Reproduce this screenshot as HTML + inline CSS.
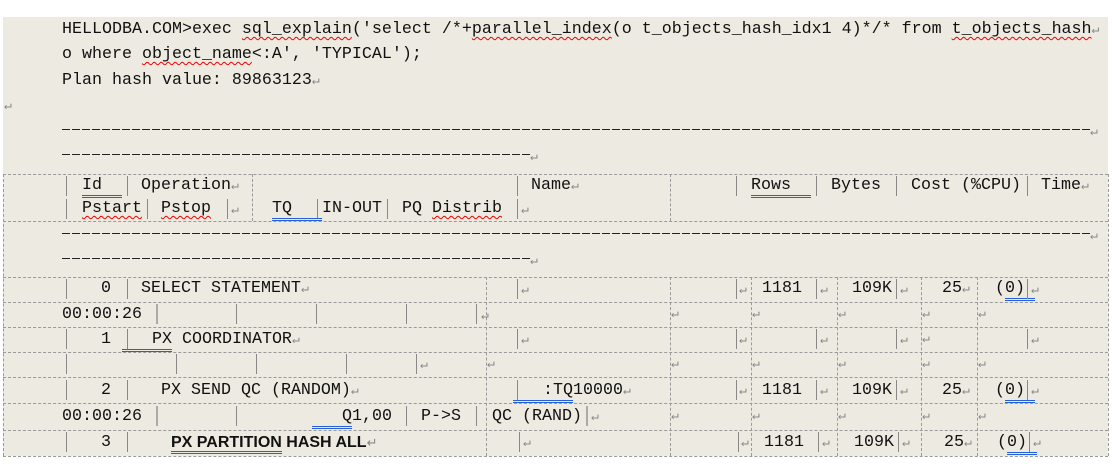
<!DOCTYPE html>
<html><head><meta charset="utf-8"><style>
*{margin:0;padding:0}
body{width:1112px;height:469px;background:#fff;position:relative;overflow:hidden;font-family:"Liberation Mono","Noto Sans CJK SC",monospace;font-size:16.67px;color:#111}
.bg{position:absolute;left:3px;top:17px;width:1105px;height:439px;background:#edebe1}
.t{position:absolute;white-space:pre;line-height:20px;margin-top:2px}
.r{color:#888;font-size:13px}
.w{text-decoration:underline wavy #e00;text-decoration-thickness:1px;text-underline-offset:3px}
.u{border-bottom:3px double #2660d8}
.h{position:absolute;height:0;border-top:1px dashed #9a9a9a}
.v{position:absolute;width:0;border-left:1px dashed #9a9a9a}
.b{position:absolute;width:1px;background:#888}
.dl{position:absolute;height:1px;background:repeating-linear-gradient(90deg,#222 0 8px,transparent 8px 10px)}
.bold{font-family:"Liberation Sans",sans-serif;font-weight:bold;font-size:16px}
</style></head><body>
<div class="bg"></div>
<div class="t" style="left:62px;top:18px">HELLODBA.COM&gt;exec <span class="w">sql_explain</span>('select /*+<span class="w">parallel_index</span>(o t_objects_hash_idx1 4)*/* from <span class="w">t_objects_hash</span><span class="r">↵</span></div>
<div class="t" style="left:62px;top:43px">o where <span class="w">object_name</span>&lt;:A', 'TYPICAL');</div>
<div class="t" style="left:62px;top:69px">Plan hash value: 89863123<span class="r">↵</span></div>
<div class="t r" style="left:4px;top:94px">↵</div>
<div class="dl" style="left:62px;top:129px;width:1030px"></div>
<div class="t r" style="left:1090px;top:120px">↵</div>
<div class="dl" style="left:62px;top:154px;width:470px"></div>
<div class="t r" style="left:530px;top:145px">↵</div>

<div class="h" style="left:3px;top:174px;width:1105px"></div>
<div class="h" style="left:3px;top:221px;width:1105px"></div>
<div class="h" style="left:3px;top:277px;width:1105px"></div>
<div class="h" style="left:3px;top:302px;width:1105px"></div>
<div class="h" style="left:3px;top:327px;width:1105px"></div>
<div class="h" style="left:3px;top:352px;width:1105px"></div>
<div class="h" style="left:3px;top:377px;width:1105px"></div>
<div class="h" style="left:3px;top:403px;width:1105px"></div>
<div class="h" style="left:3px;top:430px;width:1105px"></div>
<div class="h" style="left:3px;top:456px;width:1105px"></div>
<div class="v" style="left:3px;top:174px;height:282px"></div>
<div class="v" style="left:1108px;top:174px;height:282px"></div>
<div class="v" style="left:252px;top:174px;height:47px"></div>
<div class="v" style="left:670px;top:174px;height:47px"></div>
<div class="v" style="left:486px;top:277px;height:179px"></div>
<div class="v" style="left:670px;top:277px;height:179px"></div>
<div class="v" style="left:751px;top:277px;height:179px"></div>
<div class="v" style="left:837px;top:277px;height:179px"></div>
<div class="v" style="left:921px;top:277px;height:179px"></div>
<div class="v" style="left:977px;top:277px;height:179px"></div>

<div class="b" style="left:66px;top:176px;height:20px"></div>
<div class="b" style="left:127px;top:176px;height:20px"></div>
<div class="t" style="left:82px;top:174px"><span class="u">Id&nbsp;&nbsp;</span></div>
<div class="t" style="left:141px;top:174px">Operation<span class="r">↵</span></div>
<div class="b" style="left:517px;top:176px;height:20px"></div>
<div class="t" style="left:531px;top:174px">Name<span class="r">↵</span></div>
<div class="b" style="left:736px;top:176px;height:20px"></div>
<div class="b" style="left:816px;top:176px;height:20px"></div>
<div class="b" style="left:896px;top:176px;height:20px"></div>
<div class="b" style="left:1027px;top:176px;height:20px"></div>
<div class="t" style="left:751px;top:174px"><span class="u">Rows&nbsp;&nbsp;</span></div>
<div class="t" style="left:831px;top:174px">Bytes</div>
<div class="t" style="left:911px;top:174px">Cost (%CPU)</div>
<div class="t" style="left:1041px;top:174px">Time<span class="r">↵</span></div>
<div class="b" style="left:66px;top:199px;height:20px"></div>
<div class="b" style="left:147px;top:199px;height:20px"></div>
<div class="b" style="left:227px;top:199px;height:20px"></div>
<div class="b" style="left:317px;top:199px;height:20px"></div>
<div class="b" style="left:387px;top:199px;height:20px"></div>
<div class="b" style="left:517px;top:199px;height:20px"></div>
<div class="t" style="left:82px;top:197px"><span class="w">Pstart</span></div>
<div class="t" style="left:161px;top:197px"><span class="w">Pstop</span></div>
<div class="t r" style="left:231px;top:198px">↵</div>
<div class="t" style="left:272px;top:197px"><span class="u">TQ&nbsp;&nbsp;&nbsp;</span></div>
<div class="t" style="left:322px;top:197px">IN-OUT</div>
<div class="t" style="left:402px;top:197px">PQ <span class="w">Distrib</span></div>
<div class="t r" style="left:521px;top:198px">↵</div>
<div class="dl" style="left:62px;top:233px;width:1030px"></div>
<div class="t r" style="left:1090px;top:224px">↵</div>
<div class="dl" style="left:62px;top:258px;width:470px"></div>
<div class="t r" style="left:530px;top:249px">↵</div>

<div class="b" style="left:66px;top:279px;height:20px"></div>
<div class="b" style="left:127px;top:279px;height:20px"></div>
<div class="t" style="left:101px;top:277px">0</div>
<div class="t" style="left:141px;top:277px">SELECT STATEMENT<span class="r">↵</span></div>
<div class="b" style="left:517px;top:279px;height:20px"></div><div class="t r" style="left:521px;top:278px">↵</div>
<div class="b" style="left:736px;top:279px;height:20px"></div><div class="t r" style="left:739px;top:278px">↵</div>
<div class="t" style="left:762px;top:277px">1181</div>
<div class="b" style="left:816px;top:279px;height:20px"></div><div class="t r" style="left:820px;top:278px">↵</div>
<div class="t" style="left:852px;top:277px">109K</div>
<div class="b" style="left:896px;top:279px;height:20px"></div><div class="t r" style="left:900px;top:278px">↵</div>
<div class="t" style="left:942px;top:277px">25<span class="r">↵</span></div>
<div class="t" style="left:995px;top:277px">(<span class="u">0)&nbsp;</span></div>
<div class="b" style="left:1027px;top:279px;height:20px"></div><div class="t r" style="left:1031px;top:278px">↵</div>
<div class="t" style="left:62px;top:303px">00:00:26</div>
<div class="b" style="left:156px;top:304px;height:20px;background:#aaa;width:2px"></div>
<div class="b" style="left:236px;top:304px;height:20px"></div>
<div class="b" style="left:316px;top:304px;height:20px"></div>
<div class="b" style="left:406px;top:304px;height:20px"></div>
<div class="b" style="left:476px;top:304px;height:20px"></div>
<div class="t r" style="left:481px;top:304px">↵</div>
<div class="t r" style="left:671px;top:302px">↵</div><div class="t r" style="left:752px;top:302px">↵</div><div class="t r" style="left:838px;top:302px">↵</div><div class="t r" style="left:922px;top:302px">↵</div><div class="t r" style="left:978px;top:302px">↵</div>
<div class="b" style="left:66px;top:329px;height:20px"></div>
<div class="b" style="left:127px;top:329px;height:20px"></div>
<div class="t" style="left:101px;top:328px">1</div>
<div class="t" style="left:122px;top:328px"><span class="u">&nbsp;&nbsp;&nbsp;PX</span> COORDINATOR<span class="r">↵</span></div>
<div class="b" style="left:517px;top:329px;height:20px"></div><div class="t r" style="left:521px;top:328px">↵</div>
<div class="b" style="left:736px;top:329px;height:20px"></div><div class="t r" style="left:739px;top:328px">↵</div>
<div class="b" style="left:816px;top:329px;height:20px"></div><div class="t r" style="left:820px;top:328px">↵</div>
<div class="b" style="left:896px;top:329px;height:20px"></div><div class="t r" style="left:900px;top:328px">↵</div><div class="t r" style="left:922px;top:327px">↵</div>
<div class="b" style="left:1027px;top:329px;height:20px"></div><div class="t r" style="left:1031px;top:328px">↵</div>
<div class="b" style="left:66px;top:354px;height:20px"></div>
<div class="b" style="left:176px;top:354px;height:20px"></div>
<div class="b" style="left:256px;top:354px;height:20px"></div>
<div class="b" style="left:346px;top:354px;height:20px"></div>
<div class="b" style="left:416px;top:354px;height:20px"></div>
<div class="t r" style="left:420px;top:353px">↵</div><div class="t r" style="left:487px;top:352px">↵</div>
<div class="t r" style="left:671px;top:352px">↵</div><div class="t r" style="left:752px;top:352px">↵</div><div class="t r" style="left:838px;top:352px">↵</div><div class="t r" style="left:922px;top:352px">↵</div><div class="t r" style="left:978px;top:352px">↵</div>
<div class="b" style="left:66px;top:380px;height:20px"></div>
<div class="b" style="left:127px;top:380px;height:20px"></div>
<div class="t" style="left:101px;top:379px">2</div>
<div class="t" style="left:161px;top:379px">PX SEND QC (RANDOM)<span class="r">↵</span></div>
<div class="b" style="left:517px;top:380px;height:20px"></div>
<div class="t" style="left:513px;top:379px"><span class="u">&nbsp;&nbsp;&nbsp;:TQ</span>10000<span class="r">↵</span></div>
<div class="b" style="left:736px;top:380px;height:20px"></div><div class="t r" style="left:739px;top:379px">↵</div>
<div class="t" style="left:762px;top:379px">1181</div>
<div class="b" style="left:816px;top:380px;height:20px"></div><div class="t r" style="left:820px;top:379px">↵</div>
<div class="t" style="left:852px;top:379px">109K</div>
<div class="b" style="left:896px;top:380px;height:20px"></div><div class="t r" style="left:900px;top:379px">↵</div>
<div class="t" style="left:942px;top:379px">25<span class="r">↵</span></div>
<div class="t" style="left:995px;top:379px">(<span class="u">0)&nbsp;</span></div>
<div class="b" style="left:1027px;top:380px;height:20px"></div><div class="t r" style="left:1031px;top:379px">↵</div>
<div class="t" style="left:62px;top:405px">00:00:26</div>
<div class="b" style="left:156px;top:406px;height:20px;background:#aaa;width:2px"></div>
<div class="b" style="left:236px;top:406px;height:20px"></div>
<div class="t" style="left:312px;top:405px"><span class="u">&nbsp;&nbsp;&nbsp;Q</span>1,00</div>
<div class="b" style="left:406px;top:406px;height:20px"></div>
<div class="t" style="left:421px;top:405px">P-&gt;S</div>
<div class="b" style="left:476px;top:406px;height:20px"></div>
<div class="t" style="left:492px;top:405px">QC (RAND)</div>
<div class="b" style="left:586px;top:406px;height:20px;background:#aaa;width:2px"></div><div class="t r" style="left:591px;top:405px">↵</div>
<div class="t r" style="left:671px;top:404px">↵</div><div class="t r" style="left:752px;top:404px">↵</div><div class="t r" style="left:838px;top:404px">↵</div><div class="t r" style="left:922px;top:404px">↵</div><div class="t r" style="left:978px;top:404px">↵</div>
<div class="b" style="left:66px;top:432px;height:20px"></div>
<div class="b" style="left:127px;top:432px;height:20px"></div>
<div class="t" style="left:101px;top:431px">3</div>
<div class="t bold" style="left:171px;top:431px"><span class="u">PX PARTITION</span> HASH ALL<span class="r" style="font-weight:normal">↵</span></div>
<div class="b" style="left:519px;top:432px;height:20px"></div><div class="t r" style="left:523px;top:431px">↵</div>
<div class="b" style="left:738px;top:432px;height:20px"></div><div class="t r" style="left:741px;top:431px">↵</div>
<div class="t" style="left:764px;top:431px">1181</div>
<div class="b" style="left:818px;top:432px;height:20px"></div><div class="t r" style="left:822px;top:431px">↵</div>
<div class="t" style="left:854px;top:431px">109K</div>
<div class="b" style="left:898px;top:432px;height:20px"></div><div class="t r" style="left:902px;top:431px">↵</div>
<div class="t" style="left:944px;top:431px">25<span class="r">↵</span></div>
<div class="t" style="left:997px;top:431px">(<span class="u">0)&nbsp;</span></div>
<div class="b" style="left:1029px;top:432px;height:20px"></div><div class="t r" style="left:1033px;top:431px">↵</div>
</body></html>
